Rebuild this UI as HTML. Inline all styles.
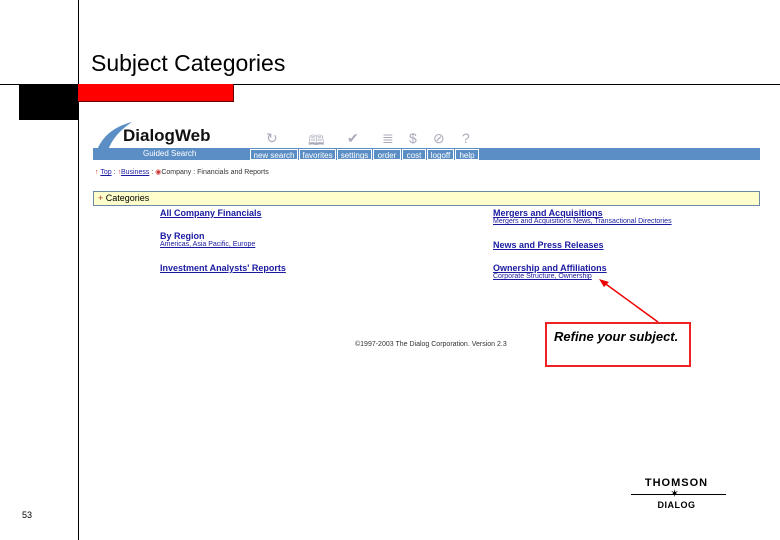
<!DOCTYPE html>
<html><head><style>
body{margin:0;width:780px;height:540px;background:#fff;position:relative;overflow:hidden;font-family:"Liberation Sans",sans-serif}
.a{position:absolute}
.lk{color:#1a1aa0;text-decoration:underline;font-weight:bold;font-size:9px;white-space:nowrap}
.sm{color:#1a1aa0;text-decoration:underline;font-size:7px;white-space:nowrap}
.btn{position:absolute;top:149px;height:11px;border:1px solid #fff;color:#fff;font-size:8px;line-height:11px;text-align:center;box-sizing:border-box;overflow:hidden;white-space:nowrap}
.ic{position:absolute;top:130px;color:#aab;font-size:14px}
</style></head><body>
<div class="a" style="left:78px;top:0;width:1px;height:540px;background:#000"></div>
<div class="a" style="left:0;top:84px;width:780px;height:1px;background:#000"></div>
<div class="a" style="left:19px;top:84px;width:59px;height:36px;background:#000"></div>
<div class="a" style="left:78px;top:84px;width:156px;height:18px;background:#f00;border-right:1px solid #600;border-bottom:1px solid #600;box-sizing:border-box"></div>
<div class="a" style="left:91px;top:50px;font-size:23px">Subject Categories</div>

<div class="a" style="left:93px;top:148px;width:667px;height:12px;background:#5b8ec4"></div>
<svg class="a" style="left:92px;top:120px" width="60" height="42"><path d="M40 2 Q8 10 2 40 L14 40 Q16 18 40 2Z" fill="#5b8ec4"/></svg>
<div class="a" style="left:123px;top:126px;font-size:17px;font-weight:bold;color:#111">DialogWeb</div>
<div class="a" style="left:143px;top:149px;font-size:8px;color:#fff">Guided Search</div>
<div class="btn" style="left:250px;width:48px">new search</div>
<div class="btn" style="left:299px;width:37px">favorites</div>
<div class="btn" style="left:337px;width:35px">settings</div>
<div class="btn" style="left:373px;width:28px">order</div>
<div class="btn" style="left:402px;width:24px">cost</div>
<div class="btn" style="left:427px;width:27px">logoff</div>
<div class="btn" style="left:455px;width:24px">help</div>
<div class="ic" style="left:266px">&#x21bb;</div><div class="ic" style="left:308px">&#x1F56E;</div><div class="ic" style="left:347px">&#x2714;</div><div class="ic" style="left:382px">&#x2263;</div><div class="ic" style="left:409px">$</div><div class="ic" style="left:433px">&#x2298;</div><div class="ic" style="left:462px">?</div>

<div class="a" style="left:95px;top:168px;font-size:7px;color:#333"><span style="color:#c33">&#x2191;</span> <u style="color:#1a1aa0">Top</u> : <span style="color:#c33">&#x2191;</span><u style="color:#1a1aa0">Business</u> : <span style="color:#c33">&#x25c9;</span>Company : Financials and Reports</div>

<div class="a" style="left:93px;top:191px;width:667px;height:15px;background:#ffffcc;border:1px solid #6a8aa8;box-sizing:border-box;font-size:9px;line-height:13px;padding-left:4px"><span style="color:#a33">+</span> Categories</div>

<div class="a lk" style="left:160px;top:208px">All Company Financials</div>
<div class="a" style="left:160px;top:231px;font-size:9px;font-weight:bold;color:#1a1aa0">By Region</div>
<div class="a sm" style="left:160px;top:241px">Americas, Asia Pacific, Europe</div>
<div class="a lk" style="left:160px;top:263px">Investment Analysts' Reports</div>
<div class="a lk" style="left:493px;top:208px">Mergers and Acquisitions</div>
<div class="a sm" style="left:493px;top:218px">Mergers and Acquisitions News, Transactional Directories</div>
<div class="a lk" style="left:493px;top:240px">News and Press Releases</div>
<div class="a lk" style="left:493px;top:263px">Ownership and Affiliations</div>
<div class="a sm" style="left:493px;top:273px">Corporate Structure, Ownership</div>

<div class="a" style="left:355px;top:341px;font-size:7px;color:#333">&copy;1997-2003 The Dialog Corporation. Version 2.3</div>

<svg class="a" style="left:595px;top:276px" width="70" height="50"><line x1="63" y1="46" x2="8" y2="6" stroke="#e00" stroke-width="1.5"/><path d="M4 3 L14 6 L9 11Z" fill="#e00"/></svg>
<div class="a" style="left:545px;top:322px;width:146px;height:45px;border:2px solid #e22;box-sizing:border-box;font-size:13px;font-weight:bold;font-style:italic;padding:5px 0 0 7px;white-space:nowrap">Refine your subject.</div>

<div class="a" style="left:630px;top:477px;width:93px;text-align:center;font-size:11px;font-weight:bold;letter-spacing:1px">THOMSON</div>
<div class="a" style="left:631px;top:494px;width:95px;height:1px;background:#000"></div>
<div class="a" style="left:670px;top:487px;font-size:11px">&#x2736;</div>
<div class="a" style="left:630px;top:500px;width:93px;text-align:center;font-size:9px;font-weight:bold;letter-spacing:0.5px">DIALOG</div>
<div class="a" style="left:22px;top:510px;font-size:9px">53</div>
</body></html>
